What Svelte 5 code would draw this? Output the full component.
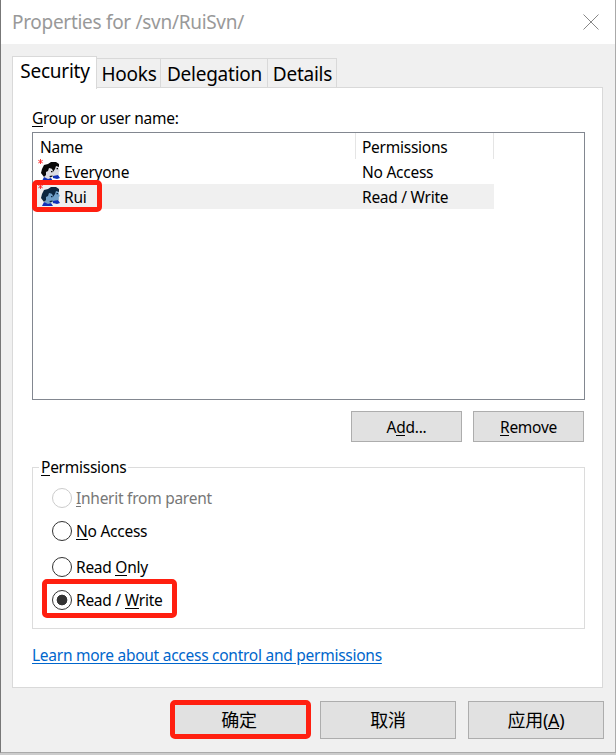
<script lang="ts">
  type Entry = { name: string; access: string };

  const tabs = ['Security', 'Hooks', 'Delegation', 'Details'];
  const entries: Entry[] = [
    { name: 'Everyone', access: 'No Access' },
    { name: 'Rui', access: 'Read / Write' },
  ];
  // key is the underlined accelerator letter
  const options = [
    { id: 'inherit', before: '', key: 'I', after: 'nherit from parent', disabled: true },
    { id: 'none', before: '', key: 'N', after: 'o Access' },
    { id: 'read', before: 'Read ', key: 'O', after: 'nly' },
    { id: 'write', before: 'Read / ', key: 'W', after: 'rite' },
  ];

  let activeTab = $state('Security');
  let selected = $state('Rui');
  let permission = $state('write');
</script>

<div class="window">
  <header class="titlebar">
    <span class="title">Properties for /svn/RuiSvn/</span>
    <button class="close" aria-label="Close">
      <svg width="16" height="16" viewBox="0 0 16 16"><path d="M.5 .5l15 15M15.5 .5l-15 15" stroke="#888" fill="none" /></svg>
    </button>
  </header>

  <div class="tabs">
    {#each tabs as tab}
      <button class="tab {tab.toLowerCase()}" class:active={tab === activeTab} onclick={() => (activeTab = tab)}>{tab}</button>
    {/each}
  </div>

  <main class="page">
    <div class="label"><u>G</u>roup or user name:</div>
    <div class="list">
      <div class="row head"><span class="cell name">Name</span><span class="cell access">Permissions</span></div>
      {#each entries as entry}
        <button class="row" class:selected={entry.name === selected} onclick={() => (selected = entry.name)}>
          <span class="cell user">
            <svg class="icon" width="24" height="25" viewBox="0 0 24 25">
              <path d="M3.500 0v5M1.300 1.300l4.400 2.600M5.700 1.300l-4.400 2.600" stroke="#f22" stroke-width=".9" />
              <path class="face" d="M16 6h5l1 4 .8 2-1 1v3l-3 1-3 3z" />
              <path class="hair" d="M11 5l3-2h5l3 2v3l-3-1-1 3-2 3-4-3z" />
              <path class="coat" d="M16 17l5-1 2 3-3 1-4-1z" />
              <path class="face" d="M9 8h5l2 4 1 2-1 1v3l-3 1v3H7l1-5-1-3z" />
              <path class="hair" d="M5 10l2-4 4-1 4 1 2 3-1 1-4-1-1 3-2 1v3l-2 2-3-4z" />
              <path class="coat" d="M5 22l2-4 4 2 3-1 2 3z" />
              <path class="hair" d="M14 12h1.500v1.300H14zM19.500 9H21v1.300h-1.500zM12.500 17l3-.5v1l-2.500 1z" />
            </svg>
            <span>{entry.name}</span>
          </span>
          <span class="cell access">{entry.access}</span>
          {#if entry.name === 'Rui'}<span class="mark user-mark"></span>{/if}
        </button>
      {/each}
    </div>

    <div class="actions">
      <button class="btn">A<u>d</u>d...</button>
      <button class="btn"><u>R</u>emove</button>
    </div>

    <fieldset class="group">
      <legend><u>P</u>ermissions</legend>
      {#each options as option}
        <label class="option {option.id}" class:disabled={option.disabled}>
          <input type="radio" name="permission" value={option.id} bind:group={permission} disabled={option.disabled} />
          <span>{option.before}<u>{option.key}</u>{option.after}</span>
          {#if option.id === 'write'}<span class="mark option-mark"></span>{/if}
        </label>
      {/each}
    </fieldset>

    <a class="link" href="#help">Learn more about access control and permissions</a>
  </main>

  <footer class="footer">
    <button class="btn ok">确定</button>
    <button class="btn">取消</button>
    <button class="btn">应用(<u>A</u>)</button>
  </footer>
</div>

<style>
  :global(body) {
    margin: 0;
    background: #ccc;
  }

  .window {
    box-sizing: border-box;
    width: 616px;
    height: 753px;
    border: solid #777;
    border-width: 0 1px 1px;
    border-right-color: #aaa;
    border-bottom-color: #aaa;
    background: #f0f0f0;
    color: #000;
    font: 15.5px/20px "Noto Sans", "Noto Sans CJK SC", sans-serif;
    letter-spacing: -0.26px;
    white-space: nowrap;
  }

  button {
    font: inherit;
    color: inherit;
    letter-spacing: inherit;
    padding: 0;
    border: 0;
    background: none;
  }

  u {
    text-decoration: none;
    box-shadow: inset 0 -1px currentColor;
    display: inline-block;
    height: 19px;
    line-height: 20px;
  }

  .titlebar {
    display: flex;
    justify-content: space-between;
    align-items: center;
    height: 44px;
    padding: 0 16px 0 11px;
    background: #fff;
    color: #999;
  }

  .title {
    font-size: 19px;
    letter-spacing: -0.3px;
  }

  .close,
  .close svg {
    display: block;
  }

  .tabs {
    display: flex;
    align-items: flex-end;
    height: 44px;
    padding-left: 11px;
    font-size: 19px;
    letter-spacing: -0.25px;
  }

  .tab {
    box-sizing: border-box;
    height: 30px;
    padding-left: 1px;
    border: 1px solid #d9d9d9;
    border-left: 0;
    border-bottom: 0;
  }

  .tab.active {
    position: relative;
    height: 33px;
    margin-bottom: -1px;
    padding-bottom: 4px;
    border-left: 1px solid #d9d9d9;
    background: #fff;
  }

  .security { width: 85px; }
  .hooks { width: 64px; }
  .delegation { width: 107px; }
  .details { width: 69px; }

  .page {
    box-sizing: border-box;
    width: 591px;
    height: 601px;
    margin-left: 11px;
    margin-top: -1px;
    padding: 20px 17px 0 19px;
    border: 1px solid #d9d9d9;
    background: #fff;
  }

  .label {
    margin-bottom: 4px;
  }

  .list {
    box-sizing: border-box;
    width: 553px;
    height: 268px;
    border: 1px solid #828790;
  }

  .row {
    position: relative;
    display: flex;
    width: 461px;
    height: 25px;
    text-align: left;
  }

  .row.head {
    height: 26px;
  }

  .row.selected {
    background: #f0f0f0;
  }

  .cell {
    box-sizing: border-box;
    display: flex;
    align-items: center;
    width: 323px;
  }

  .cell.access {
    width: 138px;
    padding-left: 6px;
  }

  .name {
    padding-left: 7px;
  }

  .head .cell {
    padding-top: 2px;
    border-right: 1px solid #e5e5e5;
  }

  .user {
    padding-left: 4px;
    gap: 3px;
  }

  .face {
    fill: #dcdce2;
  }

  .hair {
    fill: #080808;
  }

  .coat {
    fill: #1030b8;
  }

  .selected .face {
    fill: #70a0c8;
  }

  .selected .hair {
    fill: #0c2740;
  }

  .mark {
    position: absolute;
    box-sizing: border-box;
    border: 5px solid #ff1f10;
    border-radius: 5px;
    pointer-events: none;
  }

  .user-mark {
    left: -1px;
    top: -4px;
    width: 70px;
    height: 32px;
  }

  .actions {
    display: flex;
    justify-content: flex-end;
    gap: 11px;
    margin: 11px 1px 24px 0;
  }

  .btn {
    box-sizing: border-box;
    width: 111px;
    height: 31px;
    border: 1px solid #adadad;
    background: #e1e1e1;
  }

  .group {
    position: relative;
    box-sizing: border-box;
    width: 553px;
    height: 172px;
    margin: -9px 0 16px;
    padding: 0 0 0 19px;
    border: 1px solid #dcdcdc;
  }

  .group legend {
    margin-left: -13px;
    padding: 0 2px;
  }

  .option {
    position: relative;
    display: flex;
    align-items: center;
    gap: 4px;
    width: max-content;
    height: 20px;
  }

  .inherit { margin-top: 11px; }
  .none { margin-top: 13px; }
  .read { margin-top: 16px; }
  .write { margin-top: 13px; }

  .option input {
    appearance: none;
    box-sizing: border-box;
    width: 20px;
    height: 20px;
    margin: 0;
    border: 1px solid #333;
    border-radius: 50%;
    background: #fff;
  }

  .option input:checked {
    background: radial-gradient(circle, #333 5px, #fff 5.700px);
  }

  .option.disabled {
    color: #777;
  }

  .option.disabled input {
    border-color: #ccc;
  }

  .option-mark {
    left: -10px;
    top: -11px;
    width: 135px;
    height: 39px;
  }

  .link {
    color: #0066cc;
    text-underline-offset: 2px;
  }

  .footer {
    display: flex;
    gap: 12px;
    align-items: center;
    margin: 12px 0 0 169px;
    font-size: 18px;
  }

  .footer .btn {
    width: 136px;
    height: 38px;
  }

  .footer .ok {
    width: 141px;
    height: 39px;
    margin-right: -3px;
    padding-right: 3px;
    border: 5px solid #ff1f10;
    border-radius: 5px;
  }
</style>
